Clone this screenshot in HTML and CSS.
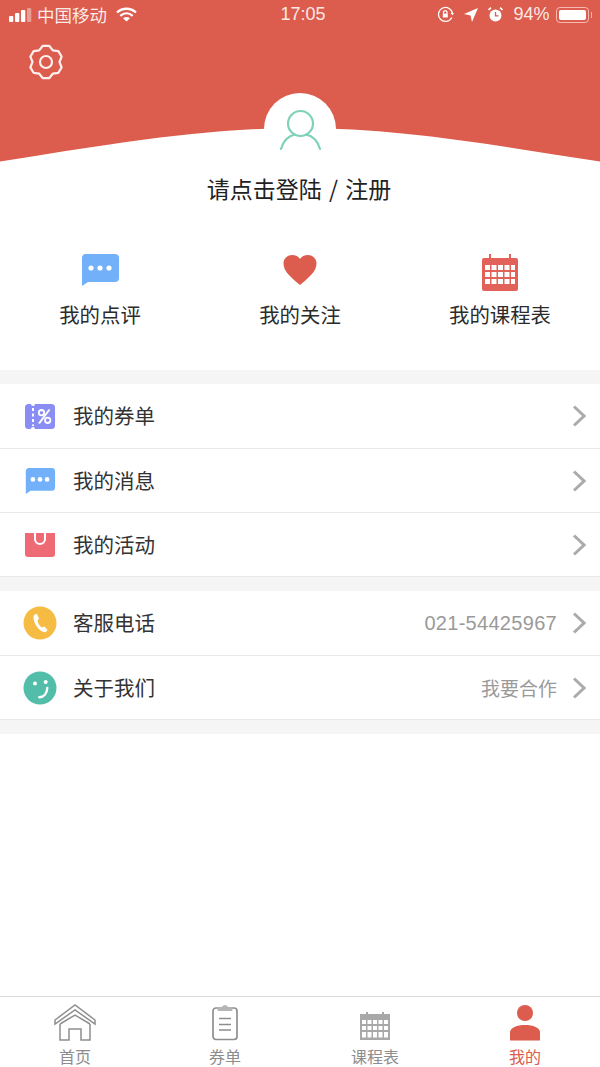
FILE: index.html
```html
<!DOCTYPE html>
<html lang="zh">
<head>
<meta charset="utf-8">
<title>我的</title>
<link rel="stylesheet" href="styles.css">
</head>
<body>
<div class="app">
  <header class="hero">
    <svg class="hero-bg" viewBox="0 0 600 166" width="600" height="166"><path d="M0 0H600V161.500C500 146 400 128 300 128C200 128 100 146 0 161.500Z" fill="#dc5c4d"/></svg>
    <div class="status">
      <div class="status-side">
        <svg width="23" height="14" viewBox="0 0 23 14" class="signal"><rect x="0" y="8" width="4.300" height="6" rx="1" fill="#fff"/><rect x="6" y="5" width="4.300" height="9" rx="1" fill="#fff"/><rect x="12" y="2" width="4.300" height="12" rx="1" fill="#fff"/><rect x="18" y="0" width="4.300" height="14" rx="1" fill="#fff" opacity=".4"/></svg>
        <span class="carrier">中国移动</span>
        <svg width="21" height="15" viewBox="0 0 21 15" class="wifi" fill="none" stroke="#fff" stroke-width="2.300"><path d="M1 5.500C6.500 .5 14.500 .5 20 5.500"/><path d="M4.300 8.800C8 5.500 13 5.500 16.700 8.800"/><path d="M10.500 14.500L7 11.300C9 9.700 12 9.700 14 11.300Z" fill="#fff" stroke="none"/></svg>
      </div>
      <span class="time">17:05</span>
      <div class="status-side status-right">
        <svg width="17" height="17" viewBox="0 0 17 17" fill="none" stroke="#fff" stroke-width="1.300"><path d="M14.800 11.500A7 7 0 1 1 15.500 8"/><path d="M13.500 7L15.500 9.200L17 7" fill="#fff" stroke="none"/><rect x="5.800" y="7.500" width="5" height="4" fill="#fff" stroke="none"/><path d="M6.500 7.500V6A1.800 1.800 0 0 1 10 6V7.500"/></svg>
        <svg width="14" height="14" viewBox="0 0 14 14"><path d="M14 0L8 14L6.500 7.500L0 6Z" fill="#fff"/></svg>
        <svg width="15" height="15" viewBox="0 0 15 15"><circle cx="7.500" cy="8.500" r="6" fill="#fff"/><path d="M7.500 5V8.800H10.500" fill="none" stroke="#dc5c4d" stroke-width="1.300"/><path d="M.5 3L3 .7M14.500 3L12 .7" stroke="#fff" stroke-width="1.600"/></svg>
        <span class="battery-text">94%</span>
        <span class="battery"><span class="battery-fill"></span></span>
        <span class="battery-cap"></span>
      </div>
    </div>
    <svg class="gear" width="36" height="36" viewBox="-18 -18 36 36" fill="none" stroke="#fdf0ee" stroke-width="2.200" stroke-linejoin="round"><path d="M-3.150-16.200L3.150-16.200L6.750-11.690L12.450-10.820L15.600-5.370L13.500 0L15.600 5.370L12.450 10.820L6.750 11.690L3.150 16.200L-3.150 16.200L-6.750 11.690L-12.450 10.820L-15.600 5.370L-13.500 0L-15.600-5.370L-12.450-10.820L-6.750-11.690Z"/><circle r="6"/></svg>
    <div class="avatar">
      <svg width="44" height="46" viewBox="0 0 44 46" fill="none" stroke="#7fd2ba" stroke-width="2.200" stroke-linecap="round"><circle cx="22.500" cy="15.500" r="12.500"/><path d="M3 41C5 34 10 28 17 26.500M42 41C40 34 35 28 28 26.500"/></svg>
    </div>
  </header>

  <h1 class="login">请点击登陆 / 注册</h1>

  <nav class="quick">
    <div class="quick-item">
      <svg class="quick-icon" width="38" height="37" viewBox="0 0 38 37" preserveAspectRatio="xMidYMin"><path d="M4 0H34A4 4 0 0 1 38 4V24A4 4 0 0 1 34 28H7L1 32V4A4 4 0 0 1 4 0Z" fill="#72b1f9"/><circle cx="10" cy="14" r="2.600" fill="#fff"/><circle cx="19" cy="14" r="2.600" fill="#fff"/><circle cx="28" cy="14" r="2.600" fill="#fff"/></svg>
      <span>我的点评</span>
    </div>
    <div class="quick-item">
      <svg class="quick-icon" width="34" height="37" viewBox="0 0 34 37" preserveAspectRatio="xMidYMin"><path d="M17 31C9 24 .5 18 .5 9.500C.5 4 5 1 9 1C12.500 1 15.500 2.500 17 5C18.500 2.500 21.500 1 25 1C29 1 33.500 4 33.500 9.500C33.500 18 25 24 17 31Z" fill="#dc5c4d"/></svg>
      <span>我的关注</span>
    </div>
    <div class="quick-item">
      <svg class="quick-icon" width="36" height="37" viewBox="0 0 36 37"><rect x="0" y="4" width="36" height="33" rx="2" fill="#e2625a"/><rect x="7" y="0" width="2" height="7" fill="#e2625a"/><rect x="27" y="0" width="2" height="7" fill="#e2625a"/><g fill="#fff"><rect x="3" y="11" width="5" height="5"/><rect x="9.500" y="11" width="5" height="5"/><rect x="16" y="11" width="5" height="5"/><rect x="22.500" y="11" width="5" height="5"/><rect x="29" y="11" width="4" height="5"/><rect x="3" y="18" width="5" height="5"/><rect x="9.500" y="18" width="5" height="5"/><rect x="16" y="18" width="5" height="5"/><rect x="22.500" y="18" width="5" height="5"/><rect x="29" y="18" width="4" height="5"/><rect x="3" y="25" width="5" height="5"/><rect x="9.500" y="25" width="5" height="5"/><rect x="16" y="25" width="5" height="5"/><rect x="22.500" y="25" width="5" height="5"/><rect x="29" y="25" width="4" height="5"/></g></svg>
      <span>我的课程表</span>
    </div>
  </nav>

  <section class="group">
    <div class="row">
      <span class="row-icon"><svg width="30" height="25" viewBox="0 0 30 25"><rect width="30" height="25" rx="3.500" fill="#8a8df4"/><circle cx="8" cy="0" r="2" fill="#fff"/><circle cx="8" cy="25" r="2" fill="#fff"/><path d="M8 4V22" stroke="#fff" stroke-width="2" stroke-dasharray="3 2.500"/><path d="M24.500 5.500L14 19.500" stroke="#fff" stroke-width="2"/><circle cx="16.500" cy="8.700" r="2.700" fill="none" stroke="#fff" stroke-width="1.800"/><circle cx="22.700" cy="16.300" r="2.700" fill="none" stroke="#fff" stroke-width="1.800"/></svg></span>
      <span class="row-label">我的券单</span>
      <svg class="chevron" width="14" height="22" viewBox="0 0 14 22"><path d="M2 1.500L12 11L2 20.500" fill="none" stroke="#ababab" stroke-width="3"/></svg>
    </div>
    <div class="row">
      <span class="row-icon"><svg class="nudge" width="30" height="26" viewBox="0 0 38 32" preserveAspectRatio="none"><path d="M4 0H34A4 4 0 0 1 38 4V24A4 4 0 0 1 34 28H7L1 32V4A4 4 0 0 1 4 0Z" fill="#72b1f9"/><circle cx="10" cy="14" r="3" fill="#fff"/><circle cx="19" cy="14" r="3" fill="#fff"/><circle cx="28" cy="14" r="3" fill="#fff"/></svg></span>
      <span class="row-label">我的消息</span>
      <svg class="chevron" width="14" height="22" viewBox="0 0 14 22"><path d="M2 1.500L12 11L2 20.500" fill="none" stroke="#ababab" stroke-width="3"/></svg>
    </div>
    <div class="row">
      <span class="row-icon"><svg class="nudge" width="30" height="24" viewBox="0 0 30 24"><path d="M0 0H30V21A3 3 0 0 1 27 24H3A3 3 0 0 1 0 21Z" fill="#ee6a75"/><path d="M10 0V6A5 5 0 0 0 20 6V0" fill="none" stroke="#fff" stroke-width="2"/></svg></span>
      <span class="row-label">我的活动</span>
      <svg class="chevron" width="14" height="22" viewBox="0 0 14 22"><path d="M2 1.500L12 11L2 20.500" fill="none" stroke="#ababab" stroke-width="3"/></svg>
    </div>
  </section>

  <section class="group">
    <div class="row">
      <span class="row-icon"><svg width="34" height="34" viewBox="0 0 34 34"><circle cx="17" cy="17" r="16.500" fill="#f5bb42"/><path d="M11.500 8.500L14 8L16 12.500L14.500 14.500C15 17 16.500 20 19 21.500L21.500 20.500L24.500 24L23 26C18 27.500 10 18 10.500 10.500Z" fill="#fff"/></svg></span>
      <span class="row-label">客服电话</span>
      <span class="row-value num">021-54425967</span>
      <svg class="chevron" width="14" height="22" viewBox="0 0 14 22"><path d="M2 1.500L12 11L2 20.500" fill="none" stroke="#ababab" stroke-width="3"/></svg>
    </div>
    <div class="row">
      <span class="row-icon"><svg width="34" height="34" viewBox="0 0 34 34"><circle cx="17" cy="17" r="16.500" fill="#52bda9"/><circle cx="12" cy="12.500" r="2" fill="#fff"/><circle cx="22.700" cy="11" r="2" fill="#fff"/><path d="M16.300 26.300C21 26 24 22 24.300 17" fill="none" stroke="#fff" stroke-width="2.400" stroke-linecap="round"/></svg></span>
      <span class="row-label">关于我们</span>
      <span class="row-value">我要合作</span>
      <svg class="chevron" width="14" height="22" viewBox="0 0 14 22"><path d="M2 1.500L12 11L2 20.500" fill="none" stroke="#ababab" stroke-width="3"/></svg>
    </div>
  </section>

  <div class="end-gap"></div>
  <div class="spacer"></div>

  <footer class="tabs">
    <div class="tab">
      <svg width="42" height="37" viewBox="0 0 42 37" fill="none" stroke="#8f8f8f" stroke-width="1.500"><path d="M1 16L21 1L41 16V20L21 6L1 20Z"/><path d="M6 20L21 11L36 20"/><path d="M6 20V36H15V25H27V36H36V20"/></svg>
      <span>首页</span>
    </div>
    <div class="tab">
      <svg width="28" height="36" viewBox="0 0 28 36" fill="none" stroke="#8f8f8f" stroke-width="1.700"><rect x="2" y="3.500" width="24" height="31.500" rx="3"/><path d="M7 6V3H11C12 .5 16 .5 17 3H21V6Z" fill="#b5b5b5" stroke="#b5b5b5" stroke-width="1"/><path d="M8 14H20M8 20H20M8 25.500H20"/></svg>
      <span>券单</span>
    </div>
    <div class="tab tab-cal">
      <svg width="30" height="28" viewBox="0 0 30 28"><rect x="0" y="2" width="30" height="26" fill="#a8a8a8"/><rect x="6" y="0" width="2" height="5" fill="#a8a8a8"/><rect x="22" y="0" width="2" height="5" fill="#a8a8a8"/><g fill="#fff"><rect x="2" y="8" width="4" height="4"/><rect x="7.500" y="8" width="4" height="4"/><rect x="13" y="8" width="4" height="4"/><rect x="18.500" y="8" width="4" height="4"/><rect x="24" y="8" width="4" height="4"/><rect x="2" y="14" width="4" height="4"/><rect x="7.500" y="14" width="4" height="4"/><rect x="13" y="14" width="4" height="4"/><rect x="18.500" y="14" width="4" height="4"/><rect x="24" y="14" width="4" height="4"/><rect x="2" y="20" width="4" height="5.500"/><rect x="7.500" y="20" width="4" height="5.500"/><rect x="13" y="20" width="4" height="5.500"/><rect x="18.500" y="20" width="4" height="5.500"/><rect x="24" y="20" width="4" height="5.500"/></g></svg>
      <span>课程表</span>
    </div>
    <div class="tab tab-active">
      <svg width="30" height="36" viewBox="0 0 30 36"><circle cx="15" cy="8.500" r="8" fill="#dc5c4d"/><path d="M0 36V28C0 23 7 20.500 15 20.500S30 23 30 28V36Z" fill="#dc5c4d"/></svg>
      <span>我的</span>
    </div>
  </footer>
</div>
</body>
</html>
```

FILE: styles.css
```css
* { box-sizing: border-box; }
html, body { margin: 0; padding: 0; background: #fff; }
body { font-family: "Liberation Sans", "Noto Sans CJK SC", sans-serif; color: #2b2b2b; }
.app { width: 600px; height: 1067px; display: flex; flex-direction: column; overflow: hidden; }

.hero { position: relative; height: 166px; flex: none; }
.hero-bg { position: absolute; left: 0; top: 0; }
.status { position: relative; height: 32px; display: grid; grid-template-columns: 1fr auto 1fr; align-items: center; padding: 0 8px 3px 9px; color: #fbe9e6; font-size: 18px; }
.status-side { display: flex; align-items: center; }
.status-right { justify-content: flex-end; gap: 10px; }
.signal { margin-right: 5px; }
.carrier { font-family: "Noto Sans CJK SC", sans-serif; font-size: 17.500px; }
.wifi { margin-left: 9px; }
.time { margin-left: 5px; }
.battery { width: 33px; height: 16px; margin-left: -4px; padding: 2px; border: 1px solid #f5b9b2; border-radius: 4px; display: flex; }
.battery-fill { flex: 1; background: #fff; border-radius: 2px; }
.battery-cap { width: 1.500px; height: 6px; margin-left: -8px; background: #f5b9b2; }
.gear { position: relative; display: block; margin: 12px 0 0 28px; }
.avatar { position: absolute; left: 264px; top: 93px; width: 72px; height: 72px; border-radius: 50%; background: #fff; display: flex; align-items: flex-start; justify-content: center; padding: 15px 0 0; }

.login { margin: 6px 0 0; padding-right: 2px; height: 32px; line-height: 32px; font-size: 23px; font-weight: 400; word-spacing: 2px; text-align: center; color: #222; font-family: "Noto Sans CJK SC", sans-serif; }

.quick { height: 166px; padding-top: 50px; display: grid; grid-template-columns: repeat(3, 1fr); font-family: "Noto Sans CJK SC", sans-serif; font-size: 20.400px; }
.quick-item { display: flex; flex-direction: column; align-items: center; }
.quick-icon { height: 37px; margin-bottom: 8px; }
.quick-item span { line-height: 30px; }

.group { border-top: 14px solid #f5f5f5; }
.row { height: 64px; display: flex; align-items: center; padding: 0 14px 0 23px; border-bottom: 1px solid #e9e9e9; font-family: "Noto Sans CJK SC", sans-serif; font-size: 20.500px; }
.row:first-child { height: 65px; }
.row-icon { width: 50px; display: flex; justify-content: flex-start; }
.row-icon svg { margin-left: 2px; }
.row-icon .nudge { margin-top: 1px; }
.group + .group .row-icon svg { margin-left: 0; }
.row-label { flex: 1; color: #333; padding-bottom: 2px; }
.row-value { color: #9a9a9a; margin-right: 15px; font-size: 19px; }
.row-value.num { font-family: "Liberation Sans", sans-serif; font-size: 20px; letter-spacing: .3px; }
.chevron { flex: none; }

.end-gap { height: 14px; background: #f5f5f5; flex: none; }
.spacer { flex: 1; }

.tabs { height: 71px; flex: none; border-top: 1px solid #d9d9d9; display: grid; grid-template-columns: repeat(4, 1fr); font-family: "Liberation Sans", "Noto Sans CJK SC", sans-serif; font-size: 16px; color: #8d8d8d; }
.tab { display: flex; flex-direction: column; align-items: center; justify-content: flex-start; padding-top: 7px; }
.tab svg { height: 37px; margin-bottom: 7px; }
.tab-cal svg { height: 28px; margin: 8px 0 8px; }
.tab span { line-height: 20px; }
.tab-active { color: #dc5c4d; }
```
